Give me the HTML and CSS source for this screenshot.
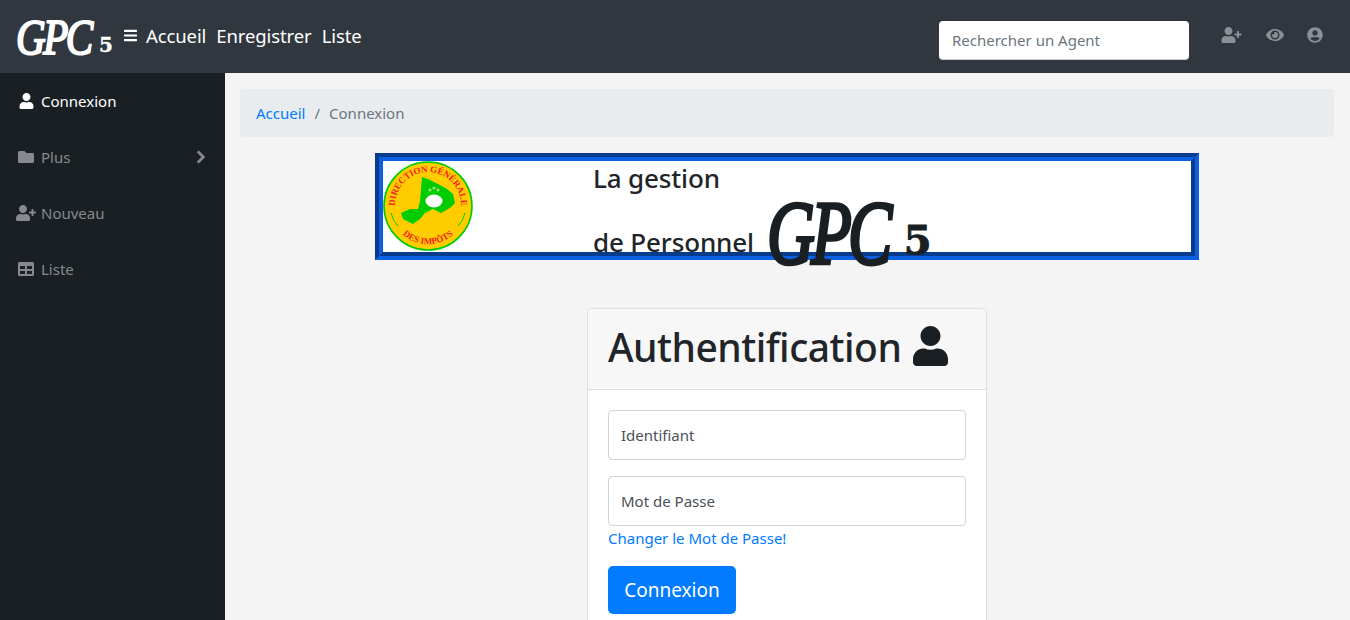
FILE: index.html
```html
<!DOCTYPE html>
<html lang="fr">
<head>
<meta charset="utf-8">
<title>GPC5</title>
<link rel="stylesheet" href="styles.css">
</head>
<body>
<svg class="defs" width="0" height="0" aria-hidden="true">
  <symbol id="i-user" viewBox="0 0 448 512"><path d="M224 256c70.7 0 128-57.3 128-128S294.7 0 224 0 96 57.3 96 128s57.3 128 128 128zm89.6 32h-16.7c-22.2 10.2-46.9 16-72.9 16s-50.6-5.8-72.9-16h-16.7C60.2 288 0 348.2 0 422.4V464c0 26.5 21.5 48 48 48h352c26.5 0 48-21.5 48-48v-41.6c0-74.2-60.2-134.4-134.4-134.4z"/></symbol>
  <symbol id="i-user-plus" viewBox="0 0 640 512"><path d="M624 208h-64v-64c0-8.8-7.2-16-16-16h-32c-8.8 0-16 7.2-16 16v64h-64c-8.8 0-16 7.2-16 16v32c0 8.8 7.2 16 16 16h64v64c0 8.8 7.2 16 16 16h32c8.8 0 16-7.2 16-16v-64h64c8.8 0 16-7.2 16-16v-32c0-8.8-7.2-16-16-16zm-400 48c70.7 0 128-57.3 128-128S294.7 0 224 0 96 57.3 96 128s57.3 128 128 128zm89.6 32h-16.7c-22.2 10.2-46.9 16-72.9 16s-50.6-5.8-72.9-16h-16.7C60.2 288 0 348.2 0 422.4V464c0 26.5 21.5 48 48 48h352c26.5 0 48-21.5 48-48v-41.6c0-74.2-60.2-134.4-134.4-134.4z"/></symbol>
  <symbol id="i-folder" viewBox="0 0 512 512"><path d="M464 128H272l-64-64H48C21.49 64 0 85.49 0 112v288c0 26.51 21.49 48 48 48h416c26.51 0 48-21.49 48-48V176c0-26.51-21.49-48-48-48z"/></symbol>
  <symbol id="i-chevron" viewBox="0 0 320 512"><path d="M285.476 272.971L91.132 467.314c-9.373 9.373-24.569 9.373-33.941 0l-22.667-22.667c-9.357-9.357-9.375-24.522-.04-33.901L188.505 256 34.484 101.255c-9.335-9.379-9.317-24.544.04-33.901l22.667-22.667c9.373-9.373 24.569-9.373 33.941 0L285.475 239.03c9.373 9.372 9.373 24.568.001 33.941z"/></symbol>
  <symbol id="i-table" viewBox="0 0 512 512"><path d="M464 32H48C21.49 32 0 53.49 0 80v352c0 26.51 21.49 48 48 48h416c26.51 0 48-21.49 48-48V80c0-26.51-21.49-48-48-48zM224 416H64v-96h160v96zm0-160H64v-96h160v96zm224 160H288v-96h160v96zm0-160H288v-96h160v96z"/></symbol>
  <symbol id="i-eye" viewBox="0 0 576 512"><path d="M572.52 241.4C518.29 135.59 410.93 64 288 64S57.68 135.64 3.48 241.41a32.35 32.35 0 0 0 0 29.19C57.71 376.41 165.07 448 288 448s230.32-71.64 284.52-177.41a32.35 32.35 0 0 0 0-29.19zM288 400a144 144 0 1 1 144-144 143.93 143.93 0 0 1-144 144zm0-240a95.31 95.31 0 0 0-25.31 3.79 47.85 47.85 0 0 1-66.9 66.9A95.78 95.78 0 1 0 288 160z"/></symbol>
  <symbol id="i-user-circle" viewBox="0 0 496 512"><path d="M248 8C111 8 0 119 0 256s111 248 248 248 248-111 248-248S385 8 248 8zm0 96c48.6 0 88 39.4 88 88s-39.4 88-88 88-88-39.4-88-88 39.4-88 88-88zm0 344c-58.7 0-111.3-26.6-146.5-68.2 18.8-35.4 55.6-59.8 98.5-59.8 2.4 0 4.8.4 7.1 1.1 13 4.2 26.6 6.9 40.9 6.9 14.3 0 28-2.7 40.9-6.9 2.3-.7 4.7-1.1 7.1-1.1 42.9 0 79.7 24.4 98.5 59.8C359.3 421.4 306.7 448 248 448z"/></symbol>
  <symbol id="i-bars" viewBox="0 0 448 512"><path d="M16 132h416c8.837 0 16-7.163 16-16V76c0-8.837-7.163-16-16-16H16C7.163 60 0 67.163 0 76v40c0 8.837 7.163 16 16 16zm0 160h416c8.837 0 16-7.163 16-16v-40c0-8.837-7.163-16-16-16H16c-8.837 0-16 7.163-16 16v40c0 8.837 7.163 16 16 16zm0 160h416c8.837 0 16-7.163 16-16v-40c0-8.837-7.163-16-16-16H16c-8.837 0-16 7.163-16 16v40c0 8.837 7.163 16 16 16z"/></symbol>
</svg>

<header class="topbar">
  <a class="brand" href="#"><span class="brand-gpc">GPC</span><span class="brand-five">5</span></a>
  <svg class="bars"><use href="#i-bars"/></svg>
  <nav class="toplinks">
    <a href="#">Accueil</a>
    <a href="#">Enregistrer</a>
    <a href="#">Liste</a>
  </nav>
  <input class="search" type="text" placeholder="Rechercher un Agent">
  <div class="topicons">
    <svg class="ti ti-plus"><use href="#i-user-plus"/></svg>
    <svg class="ti ti-eye"><use href="#i-eye"/></svg>
    <svg class="ti ti-circle"><use href="#i-user-circle"/></svg>
  </div>
</header>

<div class="layout">
  <aside class="sidebar">
    <a class="side-item active" href="#"><span class="side-icon"><svg class="si-user"><use href="#i-user"/></svg></span>Connexion</a>
    <a class="side-item" href="#"><span class="side-icon"><svg class="si-folder"><use href="#i-folder"/></svg></span>Plus<svg class="si-chevron"><use href="#i-chevron"/></svg></a>
    <a class="side-item" href="#"><span class="side-icon"><svg class="si-plus"><use href="#i-user-plus"/></svg></span>Nouveau</a>
    <a class="side-item" href="#"><span class="side-icon"><svg class="si-folder"><use href="#i-table"/></svg></span>Liste</a>
  </aside>

  <main class="content">
    <ol class="breadcrumb">
      <li><a href="#">Accueil</a></li>
      <li class="sep">/</li>
      <li class="current">Connexion</li>
    </ol>

    <section class="banner">
      <svg class="seal" viewBox="0 0 90 90">
        <defs>
          <path id="arc-top" d="M13.5 54 A33 33 0 1 1 76.5 54"/>
          <path id="arc-bottom" d="M10 60 A38 38 0 0 0 80 60"/>
        </defs>
        <circle cx="45" cy="45" r="44" fill="#fc0" stroke="#0c0" stroke-width="1.6"/>
        <path d="M39 16 L45 18 L57 24 L64 28 L70 33 L72 42 L67 47 L58 52 L50 48 L42 52 L37 58 L30 63 L20 58 L18 52 L27 48 L35 48 L37 40 Z" fill="#0c0"/>
        <ellipse cx="51" cy="40" rx="8.5" ry="6.5" fill="#fff"/>
        <circle cx="47" cy="29" r="1.6" fill="#9fdc7a"/><circle cx="51" cy="27" r="1.6" fill="#9fdc7a"/><circle cx="55" cy="29" r="1.6" fill="#9fdc7a"/>
        <path d="M8 52 Q10 60 15 65 M82 52 Q80 60 75 65" fill="none" stroke="#0c0" stroke-width="1"/>
        <text class="seal-text"><textPath href="#arc-top" startOffset="50%" text-anchor="middle">DIRECTION GÉNÉRALE</textPath></text>
        <text class="seal-text"><textPath href="#arc-bottom" startOffset="50%" text-anchor="middle">DES IMPÔTS</textPath></text>
      </svg>
      <div class="banner-text">
        <p class="banner-line banner-first">La gestion</p>
        <p class="banner-line banner-second">de Personnel<span class="banner-logo"><span class="logo-gpc">GPC</span><span class="logo-five">5</span></span></p>
      </div>
    </section>

    <section class="card">
      <h1 class="card-head">Authentification <svg class="head-icon"><use href="#i-user"/></svg></h1>
      <form class="card-body">
        <input class="field" type="text" placeholder="Identifiant">
        <input class="field" type="password" placeholder="Mot de Passe">
        <a class="change" href="#">Changer le Mot de Passe!</a>
        <button class="submit" type="button">Connexion</button>
      </form>
    </section>
  </main>
</div>
</body>
</html>
```

FILE: styles.css
```css
* { box-sizing: border-box; }
html, body { height: 100%; margin: 0; overflow: hidden; }
body {
  display: flex;
  flex-direction: column;
  font-family: "Noto Sans", "Open Sans", sans-serif;
  font-size: 15px;
  color: #212529;
  background: #f4f4f4;
}
a { text-decoration: none; }
.defs { position: absolute; }

.topbar {
  flex: 0 0 73px;
  display: flex;
  align-items: center;
  background: #31373f;
  padding: 0 27px 0 16px;
}
.brand {
  display: flex;
  align-items: baseline;
  width: 108px;
  color: #fff;
  font-family: "Liberation Serif", serif;
  font-style: italic;
  line-height: 1;
}
.brand-gpc {
  display: inline-block;
  width: 80px;
  font-size: 50px;
  letter-spacing: -3px;
  transform: scaleX(.82);
  transform-origin: left;
  -webkit-text-stroke: 2px #fff;
}
.brand-five {
  position: relative;
  top: -2px;
  font-family: "DejaVu Serif", serif;
  font-style: normal;
  font-weight: 700;
  font-size: 20px;
  margin-left: 3px;
  -webkit-text-stroke: .4px #fff;
}
.bars { width: 13px; height: 15px; fill: #fff; margin: -2px 9px 0 0; }
.toplinks { display: flex; gap: 10px; margin-top: -2px; }
.toplinks a { color: #fff; font-size: 18.5px; letter-spacing: -.1px; }
.search {
  margin: 8px 0 0 auto;
  width: 250px;
  height: 39px;
  padding: 0 13px;
  border: 0;
  border-bottom: 1px solid #c8ccd4;
  border-radius: 4px;
  background: #fff;
  font: 15px "Noto Sans", sans-serif;
}
.search::placeholder { color: #6c757d; opacity: 1; }
.topicons { display: flex; align-items: center; margin: -4px 0 0 32px; }
.ti { fill: #8b9097; height: 16px; }
.ti-plus { width: 21px; margin-right: 24px; }
.ti-eye { width: 18px; margin-right: 23px; }
.ti-circle { width: 16px; }

.layout { flex: 1; display: flex; min-height: 0; }
.sidebar { flex: 0 0 225px; background: #1a1f23; }
.side-item {
  display: flex;
  align-items: center;
  height: 56px;
  padding-right: 19px;
  color: #868a8f;
  font-size: 15px;
}
.side-item.active { color: #fff; }
.side-icon {
  flex: 0 0 41px;
  display: flex;
  justify-content: flex-end;
  padding-right: 5px;
  fill: #868a8f;
}
.active .side-icon { fill: #fff; }
.si-user { width: 15px; height: 16px; margin-right: 2px; }
.si-folder { width: 18px; height: 16px; margin-right: 1px; }
.si-plus { width: 20px; height: 16px; }
.si-chevron {
  width: 10px;
  height: 14px;
  margin: -1px 0 0 auto;
  fill: #868a8f;
  stroke: #868a8f;
  stroke-width: 30;
}

.content {
  flex: 1;
  min-width: 0;
  padding: 16px 16px 0 15px;
  display: flex;
  flex-direction: column;
  align-items: center;
  overflow: hidden;
}
.breadcrumb {
  flex: 0 0 48px;
  align-self: stretch;
  list-style: none;
  display: flex;
  align-items: center;
  gap: 9px;
  margin: 0 0 16px;
  padding: 0 16px;
  background: #e9ecef;
  border-radius: 4px;
}
.breadcrumb a { color: #007bff; }
.sep, .current { color: #6c757d; }

.banner {
  flex: 0 0 107px;
  min-height: 0;
  width: 824px;
  display: flex;
  border: 8px groove #0c5fe0;
  background: #fff;
  margin-bottom: 48px;
}
.seal { flex: 0 0 90px; height: 90px; }
.seal-text {
  font-family: "Liberation Serif", serif;
  font-weight: 700;
  font-size: 9px;
  fill: #f21d1d;
}
.banner-text {
  margin-left: 120px;
  color: #212529;
  font-size: 26px;
  font-weight: 500;
  letter-spacing: -.15px;
}
.banner-line { margin: 0; line-height: 36px; white-space: nowrap; }
.banner-first { margin-top: -1px; }
.banner-second { margin-top: 28px; display: flex; }
.banner-logo {
  display: block;
  position: relative;
  margin-left: 17px;
  width: 161px;
  height: 36px;
  font-family: "Liberation Serif", serif;
  font-style: italic;
  font-weight: 400;
  color: #1a1f23;
  letter-spacing: 0;
}
.logo-gpc {
  position: absolute;
  left: -4px;
  top: -37px;
  font-size: 92px;
  line-height: 1;
  letter-spacing: -5px;
  transform: scaleX(.72);
  transform-origin: left;
  -webkit-text-stroke: 3.6px #1a1f23;
}
.logo-five {
  position: absolute;
  left: 133px;
  top: -8px;
  font-family: "DejaVu Serif", serif;
  font-style: normal;
  font-weight: 700;
  font-size: 40px;
  line-height: 1.2;
  -webkit-text-stroke: 1px #1a1f23;
}

.card {
  flex: none;
  width: 400px;
  background: #fff;
  border: 1px solid #dfdfdf;
  border-radius: 4px;
}
.card-head {
  display: flex;
  align-items: center;
  gap: 11px;
  height: 81px;
  margin: 0;
  padding: 0 20px 6px;
  background: #f7f7f7;
  border-bottom: 1px solid #dfdfdf;
  border-radius: 4px 4px 0 0;
  font-size: 39px;
  font-weight: 500;
  letter-spacing: -.5px;
  color: #212529;
}
.head-icon { width: 35px; height: 40px; fill: #1a1f23; margin: -1px 0 0 1px; }
.card-body { display: flex; flex-direction: column; align-items: flex-start; padding: 20px; }
.field {
  width: 100%;
  height: 50px;
  margin-bottom: 16px;
  padding: 0 12px;
  border: 1px solid #ced4da;
  border-radius: 4px;
  background: #fff;
  font: 15px "Noto Sans", sans-serif;
}
.field::placeholder { color: #495057; opacity: 1; }
.field:nth-of-type(2) { margin-bottom: 1px; }
.change { color: #007bff; line-height: 22px; margin-bottom: 17px; }
.submit {
  width: 128px;
  height: 48px;
  border: 0;
  border-radius: 5px;
  background: #007bff;
  color: #fff;
  font: 19px "Noto Sans", sans-serif;
}
```
